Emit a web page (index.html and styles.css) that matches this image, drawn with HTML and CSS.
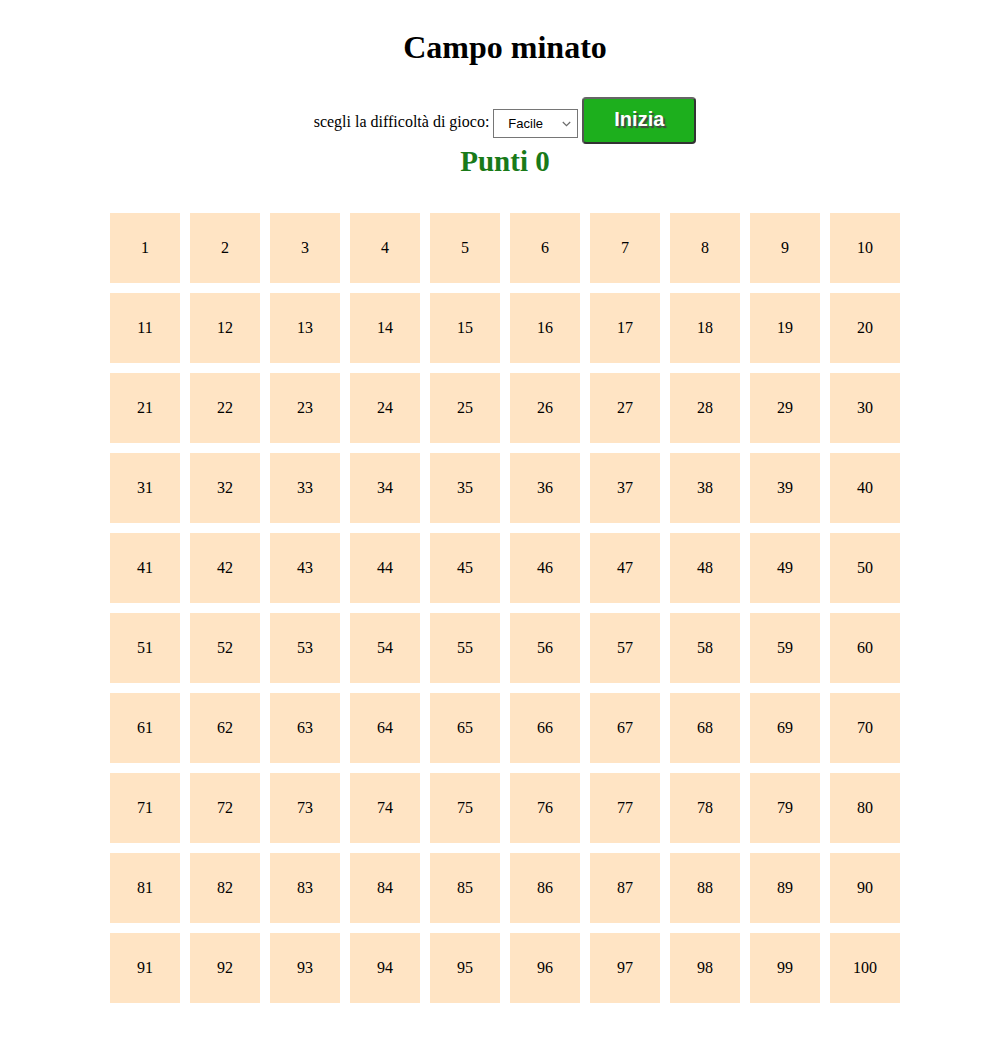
FILE: index.html
```html
<!DOCTYPE html>
<html lang="it">
<head>
<meta charset="utf-8">
<title>Campo minato</title>
<link rel="stylesheet" href="styles.css">
</head>
<body>
<h1 class="title">Campo minato</h1>
<div class="controls">
  <label class="label" for="level">scegli la difficoltà di gioco:</label>
  <span class="select-wrap">
    <select id="level" class="select">
      <option>Facile</option>
      <option>Medio</option>
      <option>Difficile</option>
    </select>
    <svg class="chev" width="9" height="6" viewBox="0 0 9 6"><path d="M0.8 1 L4.5 4.6 L8.2 1" fill="none" stroke="#6b6b6b" stroke-width="1.2"/></svg>
  </span>
  <button class="start">Inizia</button>
</div>
<h2 class="score">Punti 0</h2>
<div class="grid" id="grid"></div>
<script>
var g=document.getElementById('grid');
for(var i=1;i<=100;i++){var c=document.createElement('div');c.className='cell';c.textContent=i;g.appendChild(c);}
</script>
</body>
</html>
```
FILE: styles.css
```css
body {
  margin: 8px 0 8px 16px;
  font-family: "Liberation Serif", "Times New Roman", serif;
  color: #000;
  background: #fff;
}
.title {
  text-align: center;
  font-size: 32px;
  margin: 21px 0 0;
}
.controls {
  display: flex;
  justify-content: center;
  align-items: center;
  gap: 4px;
  margin-top: 31px;
}
.label {
  font-size: 16px;
  margin-top: 3px;
}
.select-wrap {
  position: relative;
  display: flex;
  margin-top: 5px;
}
.select {
  appearance: none;
  -webkit-appearance: none;
  width: 85px;
  height: 29px;
  font-family: "Liberation Sans", Arial, sans-serif;
  font-size: 13px;
  padding: 0 0 0 14px;
  border: 1px solid #767676;
  border-radius: 0;
  background: #fff;
  color: #000;
  margin: 0;
}
.chev {
  position: absolute;
  right: 7px;
  top: 12px;
  pointer-events: none;
}
.start {
  width: 114px;
  height: 47px;
  background: #1daf1d;
  border: 2px solid #333;
  border-top-color: #666;
  border-left-color: #555;
  border-radius: 4px;
  color: #fff;
  font-family: "Liberation Sans", Arial, sans-serif;
  font-weight: bold;
  font-size: 20px;
  text-shadow: 2px 2px 1px #444;
  padding: 0 0 3px;
}
.score {
  text-align: center;
  color: #197a19;
  font-size: 29px;
  margin: 0;
  line-height: 34px;
}
.grid {
  display: grid;
  grid-template-columns: repeat(10, 70px);
  gap: 10px;
  width: 790px;
  margin: 35px auto 0;
}
.cell {
  width: 70px;
  height: 70px;
  background: #ffe4c4;
  display: flex;
  align-items: center;
  justify-content: center;
  font-size: 16px;
}
```
